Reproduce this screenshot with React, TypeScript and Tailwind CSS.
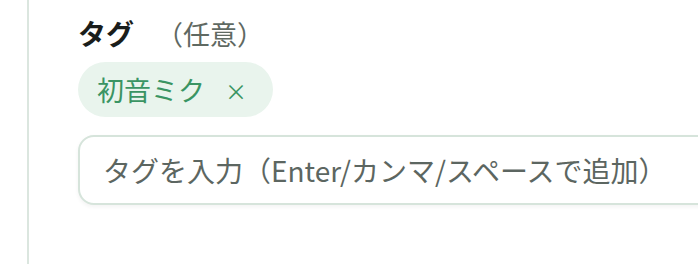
import React from 'react';

export default function App() {
  return (
    <div
      className="h-[264px] w-[698px] overflow-hidden bg-white"
      style={{ fontFamily: '"Noto Sans CJK JP", "Noto Sans", sans-serif' }}
    >
      <div className="ml-[27px] h-full border-l-2 border-[#dbe6df] pl-[49px] pt-[12px]">
        {/* Label */}
        <div className="flex h-[42px] items-center">
          <span className="text-[28px] font-bold leading-none text-[#1a1d1b]">タグ</span>
          <span className="ml-[22px] text-[27px] leading-none text-[#5f6962]">（任意）</span>
        </div>

        {/* Chips */}
        <div className="mt-[8px] flex">
          <span className="flex h-[55px] items-center rounded-full bg-[#e9f4ed] pl-[19px] pr-[26px] text-[27px] leading-none text-[#3a9463]">
            初音ミク
            <button className="ml-[20px] text-[22px] leading-none text-[#3a9463]">×</button>
          </span>
        </div>

        {/* Input */}
        <div className="mt-[18px] flex h-[70px] w-[700px] items-center rounded-[16px] border-2 border-[#d6e4db] bg-white pl-[23px] shadow-[0_2px_4px_rgba(0,0,0,0.05)]">
          <span className="text-[28px] leading-none text-[#5c6661]">タグを入力（Enter/カンマ/スペースで追加）</span>
        </div>
      </div>
    </div>
  );
}
